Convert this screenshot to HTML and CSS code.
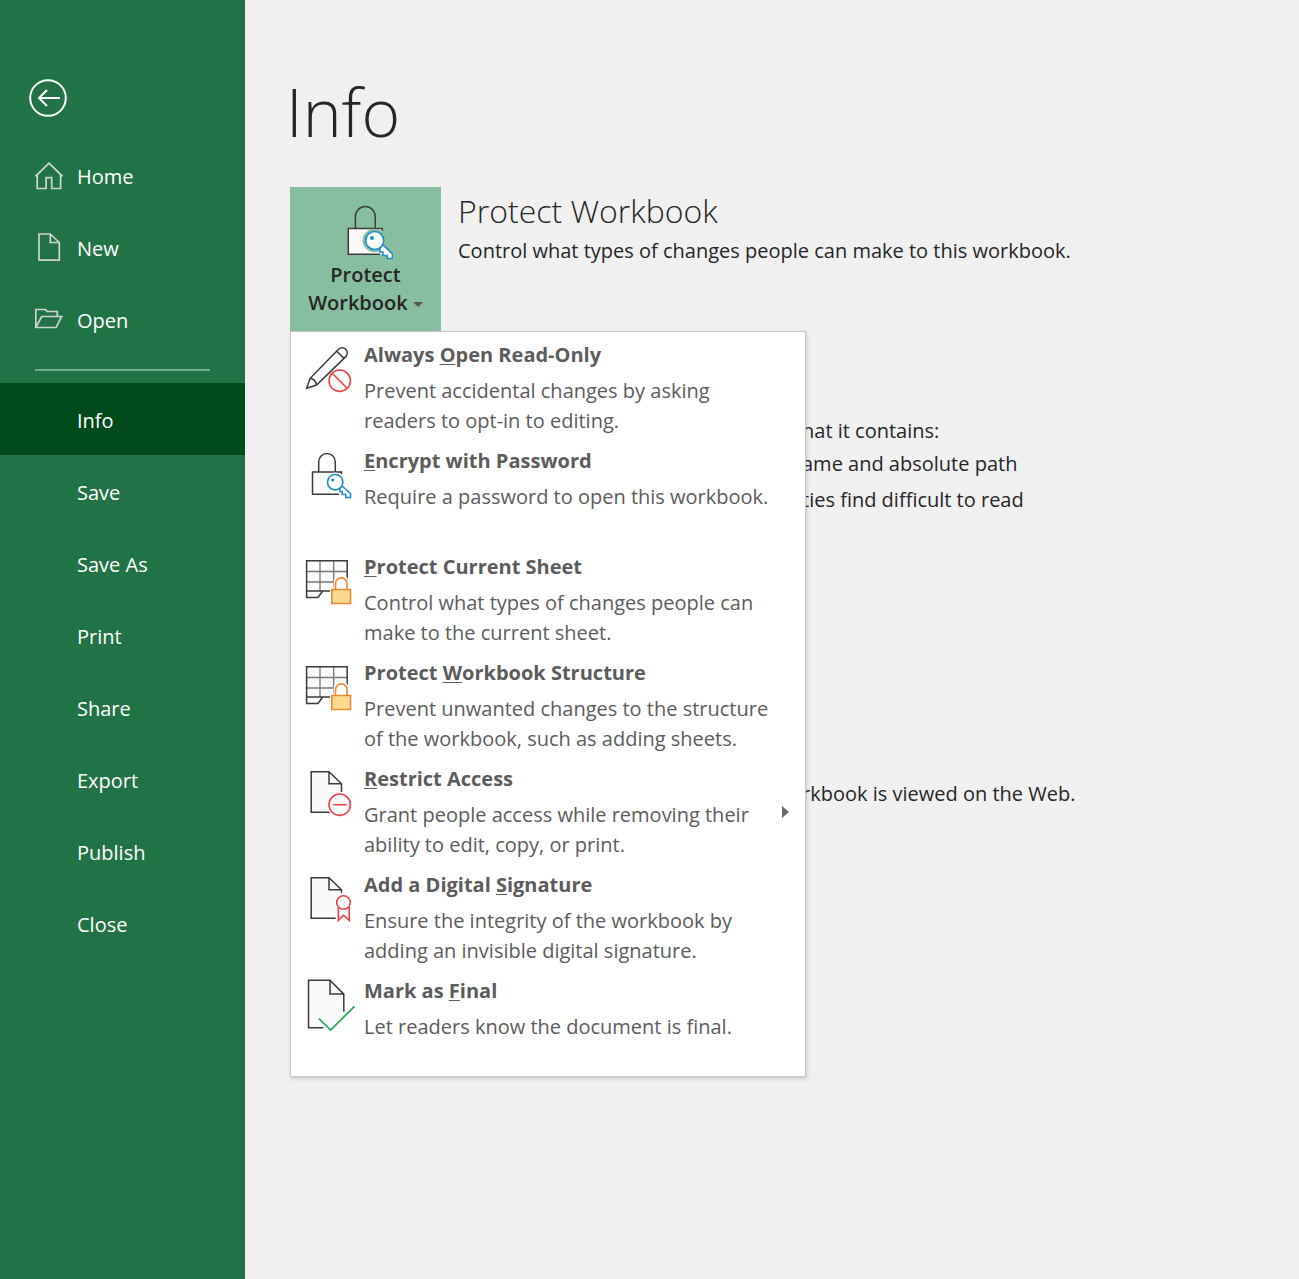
FILE: index.html
```html
<!DOCTYPE html>
<html lang="en">
<head>
<meta charset="utf-8">
<title>Info</title>
<meta name="viewport" content="width=device-width, initial-scale=1">
<link rel="stylesheet" href="styles.css">
</head>
<body>
<div class="backstage">
  <aside class="sidebar">
    <button class="back" type="button" aria-label="Back">
      <svg viewBox="0 0 38 38" width="38" height="38"><circle cx="19" cy="19" r="17.8"/><path d="M31 19H10M18 11l-8 8 8 8"/></svg>
    </button>
    <nav class="nav">
      <a class="nav-item" href="#"><svg class="nav-icon" viewBox="0 0 28 32"><path d="M.5 15.3L14 2.100l13.500 13.200M2.200 14V27.500h8.900V16.700h5.600v10.800h8.900V14"/></svg>Home</a>
      <a class="nav-item" href="#"><svg class="nav-icon" viewBox="0 0 28 32"><path d="M4 1h11.300l9 8.500V27.200H4zM15.300 1v8.500h9"/></svg>New</a>
      <a class="nav-item" href="#"><svg class="nav-icon" viewBox="0 0 28 32"><path d="M.8 22.500V4.500h9.600l1.700 2h10.200v5M.8 22.500l5.900-11h20l-5.600 11z"/></svg>Open</a>
      <hr class="nav-rule">
      <a class="nav-item nav-item-plain is-current" href="#" aria-current="page">Info</a>
      <a class="nav-item nav-item-plain" href="#">Save</a>
      <a class="nav-item nav-item-plain" href="#">Save As</a>
      <a class="nav-item nav-item-plain" href="#">Print</a>
      <a class="nav-item nav-item-plain" href="#">Share</a>
      <a class="nav-item nav-item-plain" href="#">Export</a>
      <a class="nav-item nav-item-plain" href="#">Publish</a>
      <a class="nav-item nav-item-plain" href="#">Close</a>
    </nav>
  </aside>
  <main class="main">
    <h1 class="title">Info</h1>
    <section class="panel">
      <div class="dropdown">
        <button class="tile" type="button" aria-haspopup="menu" aria-expanded="true">
          <svg class="tile-icon" viewBox="0 0 55 57">
            <path class="ink" d="M17.400 24V12.500a9.900 9.900 0 0 1 19.800 0V24"/>
            <path class="paper" d="M10.300 24.500h34v25.800h-34z"/>
            <path class="ink" d="M44.300 27v-2.500h-34v25.800H42"/>
            <circle class="halo" cx="36.500" cy="36.500" r="11.800"/>
            <path class="key" d="M44.500 40.500l10 9.500v4.500h-5.300v-3h-4.300v-3.500h-3v-4z"/>
            <circle class="key" cx="36.700" cy="36.500" r="9"/>
            <circle class="key-dot" cx="34" cy="34" r="2"/>
          </svg>
          <span>Protect</span>
          <span>Workbook <i class="caret"></i></span>
        </button>
        <div class="menu" role="menu">
          <button class="item" type="button" role="menuitem">
            <svg class="item-icon" viewBox="0 0 52 56">
              <path class="ink paper" d="M2.700 48.300l3.400-10L34.500 9.300a5 5 0 0 1 7.300 7.300L12.600 45z"/><path class="ink" d="M6.100 38.300q5.500 1 6.500 6.700M32.700 11.200l7.400 7.200"/>
              <circle class="red cover" cx="35.700" cy="40.700" r="10.700"/><path class="red" d="M28.200 33.200l15 15"/>
            </svg>
            <span class="item-text"><strong>Always <u>O</u>pen Read-Only</strong><span>Prevent accidental changes by asking<br>readers to opt-in to editing.</span></span>
          </button>
          <button class="item" type="button" role="menuitem">
            <svg class="item-icon" viewBox="0 0 52 56">
              <path class="ink" d="M14.700 26V15.800a8.300 8.300 0 0 1 16.600 0V26"/><path class="paper" d="M8.500 26h29v22.300h-29z"/>
              <path class="ink" d="M37.500 28v-2h-29v22.300H35"/>
              <circle class="cover" cx="31" cy="36" r="9.500"/>
              <path class="key" d="M37.500 39.500l9 8v4h-4.700v-3h-3.600v-3H36V42z"/><circle class="key" cx="31.200" cy="36.200" r="7.700"/><circle class="key-dot" cx="28.800" cy="34" r="1.600"/>
            </svg>
            <span class="item-text"><strong><u>E</u>ncrypt with Password</strong><span>Require a password to open this workbook.</span></span>
          </button>
          <button class="item" type="button" role="menuitem">
            <svg class="item-icon" viewBox="0 0 52 56">
              <path class="paper" d="M2.600 8.800h40.600V39H18.700L14 45.500H2.600z"/><path class="grid-line" d="M16 9v30M29.700 9v30M3 19.500h40M3 30h40"/>
              <path class="ink" d="M43.200 39V8.800H2.600v36.700H14l4.700-6.500M2.600 39h40.600"/>
              <path class="cover" d="M26 35.500h3.500V31a7.500 7.500 0 0 1 15.500 0v4.500h4V54H26z"/>
              <path class="shackle" d="M31.500 37.500v-5.800a5.800 5.800 0 0 1 11.600 0v5.800"/><path class="lock" d="M27.800 37.500h18.700v14H27.800z"/>
            </svg>
            <span class="item-text"><strong><u>P</u>rotect Current Sheet</strong><span>Control what types of changes people can<br>make to the current sheet.</span></span>
          </button>
          <button class="item" type="button" role="menuitem">
            <svg class="item-icon" viewBox="0 0 52 56">
              <path class="paper" d="M2.600 8.800h40.600V39H18.700L14 45.500H2.600z"/><path class="grid-line" d="M16 9v30M29.700 9v30M3 19.500h40M3 30h40"/>
              <path class="ink" d="M43.200 39V8.800H2.600v36.700H14l4.700-6.500M2.600 39h40.600"/>
              <path class="cover" d="M26 35.500h3.500V31a7.500 7.500 0 0 1 15.500 0v4.500h4V54H26z"/>
              <path class="shackle" d="M31.500 37.500v-5.800a5.800 5.800 0 0 1 11.600 0v5.800"/><path class="lock" d="M27.800 37.500h18.700v14H27.800z"/>
            </svg>
            <span class="item-text"><strong>Protect <u>W</u>orkbook Structure</strong><span>Prevent unwanted changes to the structure<br>of the workbook, such as adding sheets.</span></span>
          </button>
          <button class="item" type="button" role="menuitem">
            <svg class="item-icon" viewBox="0 0 52 56">
              <path class="paper" d="M7.200 7.700H25l12.500 12v28.600H7.200z"/><path class="ink" d="M26 48.300H7.200V7.700H25l12.500 12v8.600M25 7.700v12h12.500"/>
              <circle class="cover" cx="35.700" cy="40.700" r="12.500"/><circle class="red" cx="35.700" cy="40.700" r="10.700"/><path class="red" d="M29.200 40.700h13.500"/>
            </svg>
            <span class="item-text"><strong><u>R</u>estrict Access</strong><span>Grant people access while removing their<br>ability to edit, copy, or print.</span></span>
            <i class="more"></i>
          </button>
          <button class="item" type="button" role="menuitem">
            <svg class="item-icon" viewBox="0 0 52 56">
              <path class="paper" d="M7.200 7.700H25l12.500 12v28.600H7.200z"/><path class="ink" d="M31.700 48.300H7.200V7.700H25l12.500 12v3M25 7.700v12h12.500"/>
              <path class="cover" d="M32 25h16v28H32z"/><path class="red" d="M34.300 37v13.500l5.300-5.300 5.600 5.300V37"/><circle class="red cover" cx="39.500" cy="32.500" r="6.800"/>
            </svg>
            <span class="item-text"><strong>Add a Digital <u>S</u>ignature</strong><span>Ensure the integrity of the workbook by<br>adding an invisible digital signature.</span></span>
          </button>
          <button class="item" type="button" role="menuitem">
            <svg class="item-icon" viewBox="0 0 52 56">
              <path class="paper" d="M4.500 4.200H26l13.800 13.900v19L27 51.700H4.500z"/><path class="ink" d="M19.300 51.700H4.500V4.200H26l13.800 13.900v17.600M26 4.200v13.900h13.800"/>
              <path class="green" d="M14.700 42.500l12 11.500 23.800-23.700"/>
            </svg>
            <span class="item-text"><strong>Mark as <u>F</u>inal</strong><span>Let readers know the document is final.</span></span>
          </button>
        </div>
      </div>
      <div class="panel-text">
        <h2 class="heading">Protect Workbook</h2>
        <p>Control what types of changes people can make to this workbook.</p>
      </div>
    </section>
    <section class="details inspect">
      <p>hat it contains:</p>
      <ul class="findings">
        <li>ame and absolute path</li>
        <li>ties find difficult to read</li>
      </ul>
    </section>
    <section class="details browser-view">
      <p>rkbook is viewed on the Web.</p>
    </section>
  </main>
</div>
</body>
</html>
```
FILE: styles.css
```css
* { box-sizing: border-box; }
body {
  margin: 0;
  font: 20px/30px "Open Sans", "Noto Sans", sans-serif;
  color: #262626;
  background: #f0f0f0;
}
h1, h2, p, ul { margin: 0; padding: 0; }
button { font: inherit; color: inherit; border: 0; padding: 0; background: none; }
svg { display: block; fill: none; }

.backstage { display: grid; grid-template-columns: 245px 1fr; min-height: 100vh; }

.sidebar { background: #217346; color: #fff; padding-top: 79px; }
.back { display: block; margin-left: 29px; }
.back svg { stroke: #fff; stroke-width: 2; }
.nav { margin-top: 23px; }
.nav-item {
  display: flex;
  align-items: center;
  gap: 14px;
  height: 72px;
  padding: 2px 0 0 35px;
  color: #fff;
  text-decoration: none;
}
.nav-item-plain { padding: 4px 0 0 77px; }
.is-current { background: #004b1c; }
.nav-icon { width: 28px; height: 32px; stroke: #d2d2d2; stroke-width: 1.7; }
.nav-rule { height: 2px; margin: 13px 35px 12px; border: 0; background: #6fae88; }

.main { padding: 63px 45px 0; }
.title { margin-left: -4px; font-size: 66px; line-height: 96px; font-weight: 300; }
.panel { display: flex; gap: 17px; margin-top: 28px; }
.dropdown { position: relative; width: 151px; flex: none; }
.tile {
  display: flex;
  flex-direction: column;
  align-items: center;
  width: 100%;
  height: 144px;
  padding-top: 17px;
  background: #86bf9f;
  font-weight: 600;
  line-height: 28px;
}
.tile-icon { width: 55px; height: 57px; flex: none; }
.caret {
  display: inline-block;
  vertical-align: middle;
  border: 5px solid transparent;
  border-top-color: #555;
  border-bottom: 0;
}
.panel-text { padding-top: 3px; }
.heading { font-size: 32px; line-height: 42px; font-weight: 300; }
.panel-text p { margin-top: 4px; }

.menu {
  position: absolute;
  top: 100%;
  left: 0;
  z-index: 1;
  width: 516px;
  padding-top: 2px;
  background: #fff;
  border: 1px solid #c6c6c6;
  box-shadow: 1px 2px 4px rgba(0, 0, 0, .16);
  color: #5c5c5c;
}
.item {
  display: flex;
  align-items: flex-start;
  gap: 8px;
  width: 100%;
  height: 106px;
  padding: 6px 16px 4px 13px;
  text-align: left;
}
.item-icon { width: 52px; height: 56px; flex: none; }
.item-text { flex: 1; display: grid; gap: 6px; white-space: nowrap; }
.item u { text-decoration-thickness: 1px; text-underline-offset: 2px; }
.more {
  align-self: center;
  border: 6px solid transparent;
  border-left: 7px solid #6a6a6a;
  border-right: 0;
}

.details { padding-left: 512px; }
.inspect { margin-top: 85px; }
.findings { list-style: none; display: grid; gap: 6px; margin-top: 3px; }
.browser-view { margin-top: 264px; }

.ink { stroke: #3b3b3a; stroke-width: 1.5; }
.paper { fill: #fafafa; }
.cover { fill: #fff; }
.halo { fill: #86bf9f; }
.key { fill: #fff; stroke: #1e8bcd; stroke-width: 1.6; }
.key-dot { fill: #1e8bcd; }
.red { stroke: #ee4344; stroke-width: 1.6; }
.green { stroke: #1fa750; stroke-width: 1.7; }
.grid-line { stroke: #797774; stroke-width: 1.3; }
.shackle { stroke: #ee8733; stroke-width: 1.6; }
.lock { fill: #f8db8f; stroke: #ee8733; stroke-width: 1.6; }
```
